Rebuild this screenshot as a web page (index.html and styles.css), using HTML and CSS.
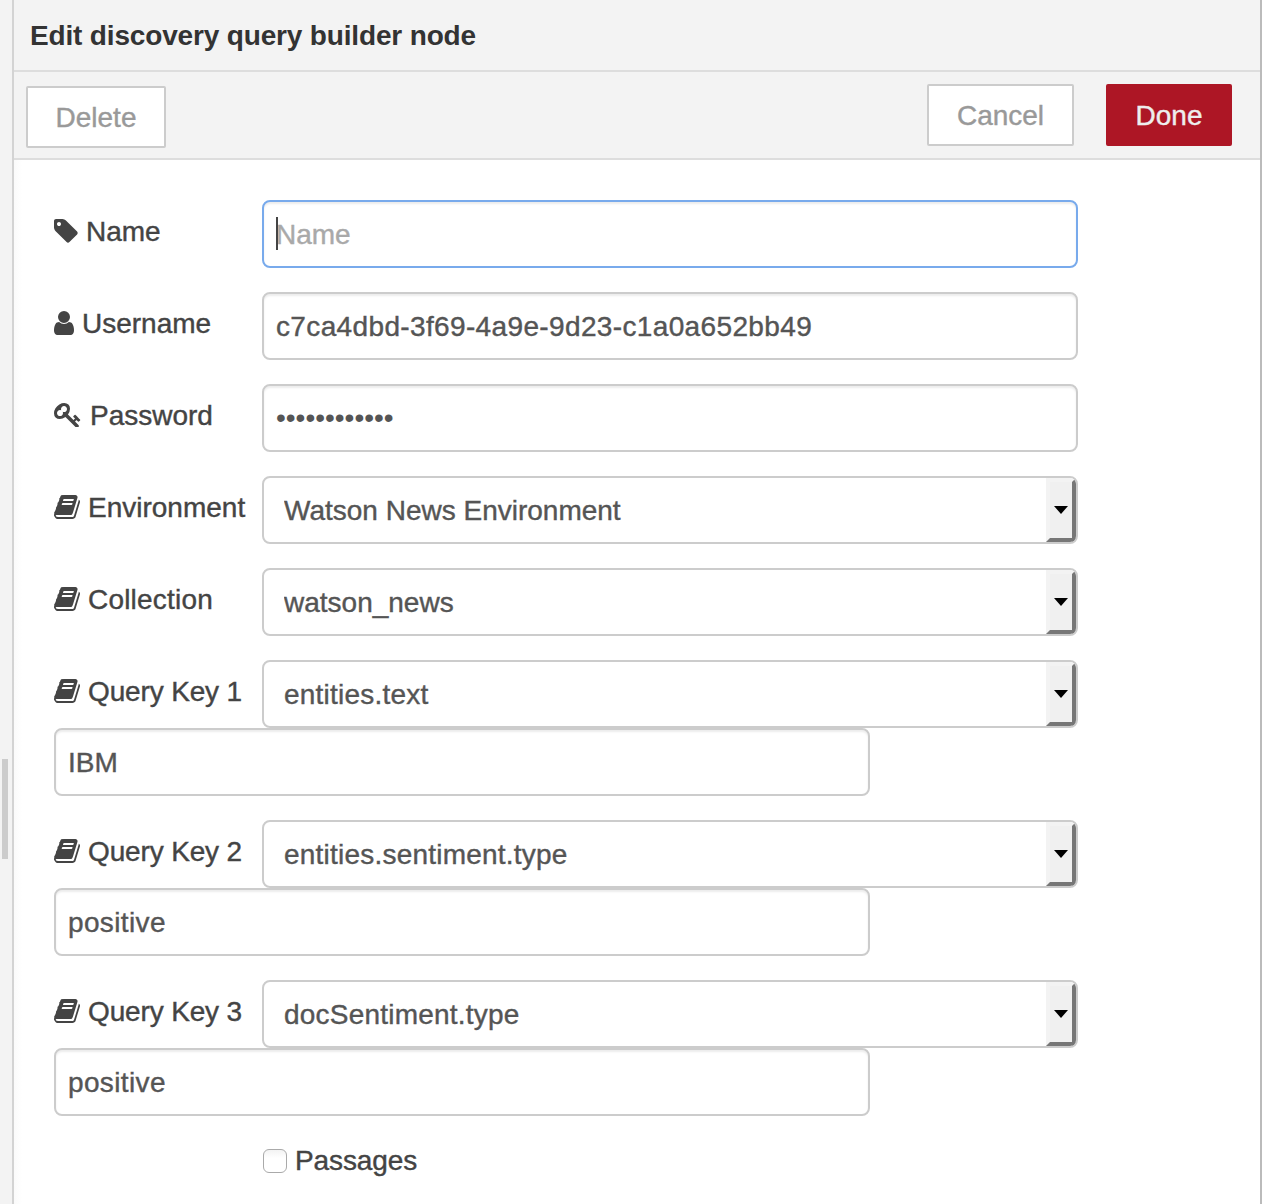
FILE: index.html
```html
<!DOCTYPE html>
<html lang="en">
<head>
<meta charset="utf-8">
<title>Edit discovery query builder node</title>
<link rel="stylesheet" href="styles.css">
</head>
<body>
<svg class="sprite" aria-hidden="true">
  <symbol id="tag" viewBox="128 128 1536 1536"><path d="M576 448q0-53-37.500-90.500t-90.500-37.500-90.500 37.500-37.500 90.500 37.500 90.500 90.500 37.500 90.500-37.500 37.500-90.500zm1067 576q0 53-37 90l-491 492q-39 37-91 37-53 0-90-37l-715-716q-38-37-64.500-101t-26.500-117v-416q0-52 38-90t90-38h416q53 0 117 26.500t102 64.500l715 714q37 39 37 91z"/></symbol>
  <symbol id="user" viewBox="256 128 1280 1536"><path d="M1536 1399q0 109-62.500 187t-150.500 78h-854q-88 0-150.500-78t-62.500-187q0-85 8.500-160.500t31.500-152 58.500-131 94-89 134.500-34.500q131 128 313 128t313-128q76 0 134.500 34.500t94 89 58.500 131 31.500 152 8.500 160.500zm-256-887q0 159-112.500 271.500t-271.500 112.500-271.500-112.500-112.500-271.500 112.500-271.500 271.500-112.500 271.500 112.500 112.500 271.500z"/></symbol>
  <symbol id="key" viewBox="0 128 1792 1536"><path d="M832 512q0-80-56-136t-136-56-136 56-56 136q0 42 19 83-41-19-83-19-80 0-136 56t-56 136 56 136 136 56 136-56 56-136q0-42-19-83 41 19 83 19 80 0 136-56t56-136zm851 704q0 17-49 66t-66 49q-9 0-28.500-16t-36.500-33-38.500-40-24.500-26l-96 96 220 220q28 28 28 68 0 42-39 81t-81 39q-40 0-68-28l-671-671q-176 131-365 131-163 0-265.500-102.500t-102.500-265.500q0-160 95-313t248-248 313-95q163 0 265.500 102.500t102.500 265.500q0 189-131 365l355 355 96-96q-3-3-26-24.500t-40-38.500-33-36.500-16-28.500q0-17 49-66t66-49q13 0 23 10 6 6 46 44.500t82 79.500 86.500 86 73 78 28.500 41z"/></symbol>
  <symbol id="book" viewBox="64 128 1664 1536"><path d="M1703 478q40 57 18 129l-275 906q-19 64-76.500 107.500t-122.500 43.500h-923q-77 0-148.500-53.500t-99.500-131.500q-24-67-2-127 0-4 3-27t4-37q1-8-3-21.500t-3-19.500q2-11 8-21t16.500-23.500 16.500-23.500q23-38 45-91.500t30-91.500q3-10 .5-30t-.5-28q3-11 17-28t17-23q21-36 42-92t25-90q1-9-2.500-32t.5-28q4-13 22-30.500t22-22.500q19-26 42.500-84.500t27.500-96.500q1-8-3-25.500t-2-26.500q2-8 9-18t18-23 17-21q8-12 16.500-30.500t15-35 16-36 19.500-32 26.500-23.500 36-11.500 47.500 5.500l-1 3q38-9 51-9h761q74 0 114 56t18 130l-274 906q-36 119-71.500 153.500t-128.500 34.500h-869q-27 0-38 15-11 16-1 43 24 70 144 70h923q29 0 56-15.500t35-41.500l300-987q7-22 5-57 38 15 59 43zm-1064 2q-4 13 2 22.500t20 9.500h608q13 0 25.500-9.500t16.500-22.500l21-64q4-13-2-22.500t-20-9.500h-608q-13 0-25.500 9.500t-16.500 22.500zm-83 256q-4 13 2 22.500t20 9.500h608q13 0 25.500-9.500t16.500-22.500l21-64q4-13-2-22.500t-20-9.500h-608q-13 0-25.500 9.500t-16.500 22.500z"/></symbol>
</svg>
<div class="editor">
  <div class="resize-strip"><span class="grip"></span></div>
  <main class="tray">
    <header class="tray-header"><h1 class="title">Edit discovery query builder node</h1></header>
    <div class="toolbar">
      <button class="btn btn-delete">Delete</button>
      <button class="btn btn-cancel">Cancel</button>
      <button class="btn btn-done">Done</button>
    </div>
    <form class="form">
      <div class="row">
        <label class="label" for="name"><svg class="icon icon-tag"><use href="#tag"/></svg><span class="label-text">Name</span></label>
        <div class="field field-focus"><input class="input" id="name" type="text" placeholder="Name"></div>
      </div>
      <div class="row">
        <label class="label" for="username"><svg class="icon icon-user"><use href="#user"/></svg><span class="label-text">Username</span></label>
        <div class="field"><input class="input spaced" id="username" type="text" value="c7ca4dbd-3f69-4a9e-9d23-c1a0a652bb49"></div>
      </div>
      <div class="row">
        <label class="label" for="password"><svg class="icon icon-key"><use href="#key"/></svg><span class="label-text">Password</span></label>
        <div class="field"><input class="input input-password" id="password" type="password" value="abcdefghijkl"></div>
      </div>
      <div class="row">
        <label class="label" for="environment"><svg class="icon icon-book"><use href="#book"/></svg><span class="label-text">Environment</span></label>
        <div class="field field-select"><select class="select" id="environment"><option>Watson News Environment</option></select><span class="arrow"></span></div>
      </div>
      <div class="row">
        <label class="label" for="collection"><svg class="icon icon-book"><use href="#book"/></svg><span class="label-text label-wide">Collection</span></label>
        <div class="field field-select"><select class="select" id="collection"><option>watson_news</option></select><span class="arrow"></span></div>
      </div>
      <div class="row">
        <label class="label" for="key1"><svg class="icon icon-book"><use href="#book"/></svg><span class="label-text label-tight">Query Key 1</span></label>
        <div class="field field-select"><select class="select select-key" id="key1"><option>entities.text</option></select><span class="arrow"></span></div>
        <div class="field"><input class="input" type="text" value="IBM"></div>
      </div>
      <div class="row">
        <label class="label" for="key2"><svg class="icon icon-book"><use href="#book"/></svg><span class="label-text label-tight">Query Key 2</span></label>
        <div class="field field-select"><select class="select select-key" id="key2"><option>entities.sentiment.type</option></select><span class="arrow"></span></div>
        <div class="field"><input class="input spaced" type="text" value="positive"></div>
      </div>
      <div class="row">
        <label class="label" for="key3"><svg class="icon icon-book"><use href="#book"/></svg><span class="label-text label-tight">Query Key 3</span></label>
        <div class="field field-select"><select class="select select-key" id="key3"><option>docSentiment.type</option></select><span class="arrow"></span></div>
        <div class="field"><input class="input spaced" type="text" value="positive"></div>
      </div>
      <label class="check-row"><input class="checkbox" type="checkbox"><span class="check-text">Passages</span></label>
    </form>
  </main>
</div>
</body>
</html>
```
FILE: styles.css
```css
* { box-sizing: border-box; }

body {
  margin: 0;
  overflow: hidden;
  background: #fff;
  color: #444;
  font: 28px/40px "Liberation Sans", Arial, sans-serif;
  -webkit-text-stroke: .4px;
}

.sprite { display: none; }

.editor {
  display: flex;
  height: 1204px;
  border-right: 2px solid #bbb;
}

.resize-strip {
  display: flex;
  flex: 0 0 14px;
  padding: 759px 0 0 2px;
  background: #f3f3f3;
  border-right: 2px solid #d3d3d3;
}

.grip {
  width: 6px;
  height: 100px;
  background: #ccc;
}

.tray {
  flex: 1;
  background: linear-gradient(to right, #fafafa, #fff 8px);
}

.tray-header {
  height: 72px;
  padding: 16px 16px 0;
  background: #f3f3f3;
  border-bottom: 2px solid #ddd;
}

.title {
  margin: 0;
  color: #333;
  font-size: 28px;
  line-height: 40px;
  font-weight: bold;
  letter-spacing: -.16px;
  -webkit-text-stroke: 0;
}

.toolbar {
  display: flex;
  align-items: flex-start;
  height: 88px;
  padding: 12px 28px 0 12px;
  background: #f3f3f3;
  border-bottom: 2px solid #ddd;
}

.btn {
  height: 62px;
  padding: 2px 0 0;
  border: 2px solid #ccc;
  border-radius: 2px;
  background: #fff;
  color: #999;
  font: inherit;
}

.btn-delete { width: 140px; margin-top: 2px; }
.btn-cancel { width: 147px; margin: 0 32px 0 auto; }
.btn-done { width: 126px; border-color: #ad1625; background: #ad1625; color: #eee; }

.form {
  display: flex;
  flex-direction: column;
  gap: 24px;
  padding: 40px 40px 0;
}

.row {
  display: flex;
  flex-wrap: wrap;
}

.label {
  display: flex;
  align-items: center;
  gap: 8px;
  width: 208px;
  height: 62px;
  white-space: nowrap;
}

.label-text { padding-top: 1px; }
.label-wide { letter-spacing: .2px; }
.label-tight { letter-spacing: -.15px; }

.icon { flex: none; height: 24px; fill: #444; }
.icon-tag { width: 24px; }
.icon-user { width: 20px; }
.icon-key { width: 28px; }
.icon-book { width: 26px; }

.field {
  position: relative;
  display: flex;
  width: 816px;
  height: 68px;
  border: 2px solid #ccc;
  border-radius: 8px;
  background: #fff;
  box-shadow: inset 0 2px 2px rgba(0, 0, 0, .075);
  overflow: hidden;
}

.field-focus { border-color: #78aaec; }

.field-focus::before {
  content: "";
  position: absolute;
  left: 12px;
  top: 15px;
  width: 2px;
  height: 33px;
  background: #444;
}

.field-select { box-shadow: none; }

.input,
.select {
  flex: 1;
  min-width: 0;
  height: 64px;
  margin: 0;
  padding: 2px 12px 0;
  border: 0;
  outline: 0;
  appearance: none;
  background: transparent;
  color: #555;
  font: inherit;
}

.input::placeholder { color: #a9a9a9; }
.input-password { padding-top: 0; -webkit-text-stroke: 0; }
.spaced { letter-spacing: .36px; }
.select { padding: 2px 20px 0; }
.select-key { letter-spacing: .22px; }

.arrow {
  display: flex;
  align-items: center;
  justify-content: center;
  width: 30px;
  height: 64px;
  border: solid;
  border-width: 4px;
  border-color: #f3f3f3 #777 #777 #f3f3f3;
  background: #f0f0f0;
}

.arrow::before {
  content: "";
  border: solid transparent;
  border-width: 8px 7px 0;
  border-top-color: #000;
}

.check-row {
  display: flex;
  align-items: center;
  gap: 8px;
  margin: 1px 0 0 209px;
  height: 40px;
}

.check-text { letter-spacing: -.1px; }

.checkbox {
  appearance: none;
  width: 24px;
  height: 24px;
  margin: 0;
  border: 1px solid #aaa;
  border-radius: 6px;
  background: linear-gradient(#f3f3f3, #fff 8px);
}
```
